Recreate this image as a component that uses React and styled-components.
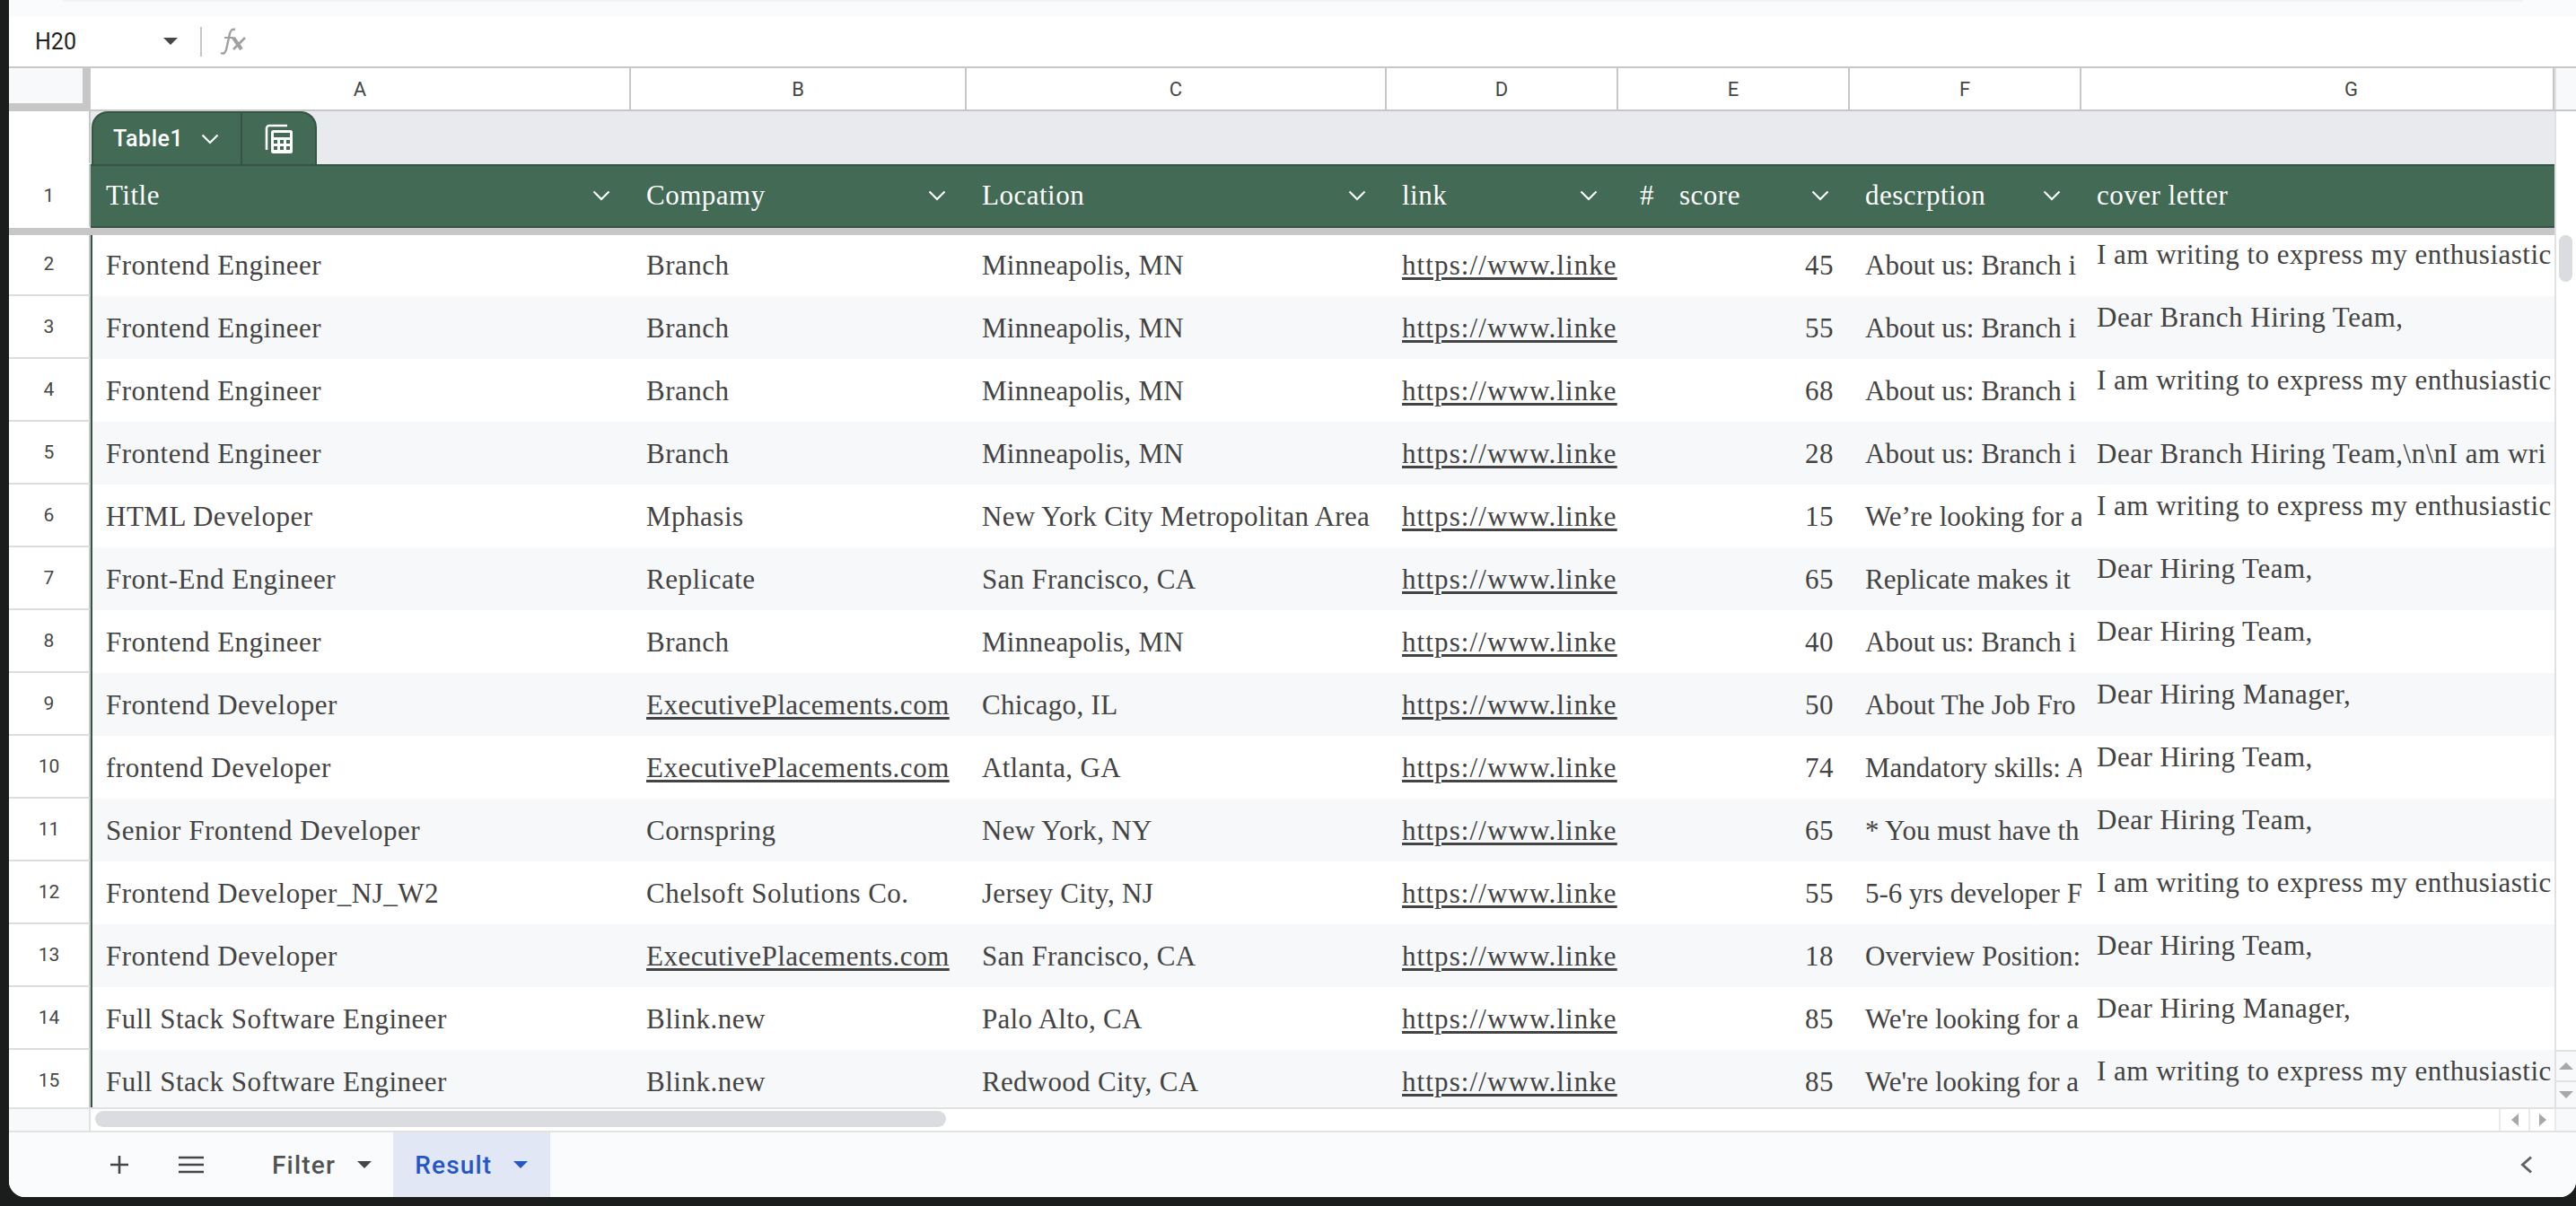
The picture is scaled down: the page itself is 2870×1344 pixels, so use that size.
import styled, { createGlobalStyle } from "styled-components";

const GlobalStyle = createGlobalStyle`
    html, body {
        margin: 0;
        padding: 0;
        background-color: #1b1d1c;
        overflow: hidden;
    }
    * {
        box-sizing: border-box;
    }
`;

const columns = "602px 374px 468px 258px 258px 258px 527px";
const serif = `"Liberation Serif", Georgia, serif`;
const sans = `Roboto, Arial, sans-serif`;

const Frame = styled.div`
    width: 2870px;
    height: 1344px;
    padding: 0 0 10px 10px;
    background-color: #1b1d1c;
`;

const Sheet = styled.div`
    height: 100%;
    display: flex;
    flex-direction: column;
    background-color: #fff;
    border-radius: 0 0 18px 18px;
    overflow: hidden;
`;

const TopBand = styled.div`
    height: 18px;
    flex: none;
    background-color: #f9fbfd;
    padding: 0 59px 0 60px;
`;

const TopPill = styled.div`
    height: 2px;
    background-color: #f0f4f9;
`;

const FormulaBar = styled.div`
    height: 56px;
    flex: none;
    display: flex;
    align-items: center;
    padding-left: 29px;
    background-color: #fff;
`;

const CellName = styled.div`
    width: 143px;
    font: 400 25px ${sans};
    color: #1f1f1f;
`;

const Separator = styled.div`
    width: 2px;
    height: 33px;
    margin: 0 20px 0 25px;
    background-color: #c7c7c7;
`;

const ColumnBar = styled.div`
    height: 50px;
    flex: none;
    display: flex;
    border-top: 2px solid #c7c7c7;
    border-bottom: 2px solid #c7c7c7;
    background-color: #fff;
`;

const Corner = styled.div`
    width: 91px;
    height: 48px;
    flex: none;
    margin-bottom: -2px;
    background-color: #f8f9fa;
    border-right: 9px solid #c7c7c7;
    border-bottom: 9px solid #c7c7c7;
`;

const ColumnLetters = styled.div`
    display: grid;
    grid-template-columns: ${columns};
`;

const ColumnLetter = styled.div`
    display: flex;
    align-items: center;
    justify-content: center;
    padding-left: ${props => props.$shift || 0}px;
    border-right: 2px solid #c7c7c7;
    font: 400 22px ${sans};
    color: #444746;
`;

const ScrollCorner = styled.div`
    flex: 1;
    background-color: #f8f9fa;
    border-left: 2px solid #e1e1e1;
`;

const Body = styled.div`
    height: 1110px;
    flex: none;
    display: flex;
`;

const Main = styled.div`
    width: 2836px;
    flex: none;
    display: flex;
    flex-direction: column;
    overflow: hidden;
`;

const TabRow = styled.div`
    height: 59px;
    flex: none;
    display: flex;
`;

const RowHead = styled.div`
    width: 91px;
    flex: none;
    display: flex;
    align-items: center;
    justify-content: center;
    background-color: #fff;
    border-right: 2px solid #c7c7c7;
    border-bottom: 2px solid ${props => props.$noLine ? "transparent" : "#dcdcdc"};
    font: 400 21px ${sans};
    color: #444746;
`;

const TabStrip = styled.div`
    flex: 1;
    display: flex;
    align-items: flex-end;
    padding-left: 1px;
    background-color: #e8eaed;
`;

const TableTab = styled.div`
    width: 251px;
    height: 59px;
    display: flex;
    background-color: #436a55;
    border: 2px solid #355443;
    border-bottom: 0;
    border-radius: 18px 18px 0 0;
`;

const TabName = styled.div`
    width: 166px;
    display: flex;
    align-items: center;
    gap: 20px;
    padding-left: 22px;
    border-right: 2px solid #355443;
    font: 500 25px ${sans};
    letter-spacing: 0.5px;
    color: #fff;
`;

const TabIcon = styled.div`
    flex: 1;
    display: flex;
    align-items: center;
    justify-content: center;
`;

const HeaderRow = styled.div`
    height: 71px;
    flex: none;
    display: flex;
`;

const HeaderCells = styled.div`
    flex: 1;
    display: grid;
    grid-template-columns: ${columns};
    background-color: #436a55;
    border-top: 2px solid #355443;
    border-bottom: 2px solid #355443;
`;

const HeaderCell = styled.div`
    display: flex;
    align-items: center;
    padding: 0 23px 1px 17px;
    font: 400 31px ${serif};
    letter-spacing: 0.5px;
    color: #fff;
`;

const HeaderLabel = styled.span`
    flex: 1;
    white-space: nowrap;
`;

const TypeMark = styled.span`
    width: 51px;
    padding-left: 7px;
`;

const ThickLine = styled.div`
    height: 8px;
    flex: none;
    background-color: #c7c7c7;
`;

const Rows = styled.div`
    flex: 1;
    overflow: hidden;
`;

const Row = styled.div`
    height: ${props => props.$first ? "68px" : "70px"};
    display: flex;
`;

const Cells = styled.div`
    flex: 1;
    display: grid;
    grid-template-columns: ${columns};
    background-color: ${props => props.$striped ? "#f6f8f9" : "#fff"};
    box-shadow: inset 2px 0 0 #355443;
`;

const Cell = styled.div`
    display: flex;
    align-items: flex-end;
    justify-content: ${props => props.$number ? "flex-end" : "flex-start"};
    min-width: 0;
    overflow: hidden;
    padding: 0 ${props => props.$number ? "18px" : "0"} ${props => props.$top ? "24px" : "0"} ${props => props.$number ? "0" : "17px"};
    font: 400 31px/${props => props.$top ? "44px" : "68px"} ${serif};
    letter-spacing: ${props => props.$spacing ?? 0.5}px;
    white-space: nowrap;
    color: #434343;
`;

const LinkText = styled.span`
    text-decoration: underline;
    text-underline-offset: 3px;
    letter-spacing: ${props => props.$spacing ?? 0.5}px;
`;

const RowNumber = styled(RowHead)`
    align-items: flex-end;
    line-height: 68px;
`;

const VerticalBar = styled.div`
    flex: 1;
    display: flex;
    flex-direction: column;
    background-color: #fff;
    border-left: 2px solid #e1e1e1;
`;

const VerticalTop = styled.div`
    height: 138px;
    flex: none;
    background-color: #fff;
`;

const VerticalThumb = styled.div`
    width: 15px;
    height: 52px;
    flex: none;
    margin-left: 3px;
    border-radius: 8px;
    background-color: #dadce0;
`;

const Spacer = styled.div`
    flex: 1;
`;

const VerticalArrow = styled.div`
    height: ${props => props.$height}px;
    flex: none;
    display: flex;
    align-items: center;
    justify-content: center;
    border-top: 2px solid #e1e1e1;
    background-color: #f8f9fa;
`;

const HorizontalBar = styled.div`
    height: 26px;
    flex: none;
    display: flex;
    border-top: 2px solid #e1e1e1;
    background-color: #fff;
`;

const BarHead = styled.div`
    width: 91px;
    flex: none;
    background-color: #f8f9fa;
    border-right: 2px solid #e1e1e1;
`;

const HorizontalTrack = styled.div`
    flex: 1;
    padding: 2px 0 0 5px;
`;

const HorizontalThumb = styled.div`
    width: 948px;
    height: 18px;
    border-radius: 9px;
    background-color: #dadce0;
`;

const ArrowBox = styled.div`
    width: ${props => props.$width}px;
    flex: none;
    display: flex;
    align-items: center;
    justify-content: center;
    border-left: 2px solid #e8eaed;
    background-color: ${props => props.$fill ? "#f8f9fa" : "#fff"};
`;

const SheetTabs = styled.div`
    flex: 1;
    display: flex;
    align-items: stretch;
    border-top: 2px solid #e1e3e1;
    background-color: #f9fbfd;
`;

const TabTool = styled.div`
    flex: none;
    display: flex;
    align-items: center;
    margin-left: ${props => props.$left}px;
`;

const SheetTab = styled.div`
    flex: none;
    display: flex;
    align-items: center;
    padding: 0 ${props => props.$right}px 0 ${props => props.$pad}px;
    gap: 24px;
    background-color: ${props => props.$active ? "#e1e7f5" : "transparent"};
    font: 500 28px ${sans};
    letter-spacing: 1.2px;
    color: ${props => props.$active ? "#2456c6" : "#505352"};
`;

const CollapseButton = styled.div`
    flex: none;
    display: flex;
    align-items: center;
    margin-left: auto;
    padding-right: 48px;
`;

function Chevron({ color = "#fff" }) {
    return (
        <svg width="20" height="12" viewBox="0 0 20 12" fill="none">
            <polyline points="1.5,1.5 10,10 18.5,1.5" stroke={color} strokeWidth="2.2" />
        </svg>
    );
}

function Caret({ color, up }) {
    return (
        <svg width="16" height="8" viewBox="0 0 16 8">
            <polygon points={up ? "0,8 16,8 8,0" : "0,0 16,0 8,8"} fill={color} />
        </svg>
    );
}

function SideCaret({ flip }) {
    return (
        <svg width="8" height="14" viewBox="0 0 8 14">
            <polygon points={flip ? "0,0 0,14 8,7" : "8,0 8,14 0,7"} fill="#a8a8a8" />
        </svg>
    );
}

function TableCalcIcon() {
    return (
        <svg width="32" height="34" viewBox="0 0 32 34" fill="none">
            <path d="M2 29V5a3 3 0 0 1 3-3h20" stroke="#fff" strokeWidth="2.6" />
            <rect x="7" y="7" width="24" height="26" rx="2.5" fill="#fff" />
            <rect x="10" y="10" width="18" height="5" fill="#436a55" />
            <g fill="#436a55">
                <rect x="10" y="18" width="4" height="4" />
                <rect x="17" y="18" width="4" height="4" />
                <rect x="24" y="18" width="4" height="4" />
                <rect x="10" y="25" width="4" height="4" />
                <rect x="17" y="25" width="4" height="4" />
                <rect x="24" y="25" width="4" height="4" />
            </g>
        </svg>
    );
}

function FxIcon() {
    return (
        <svg width="30" height="30" viewBox="0 0 30 30" fill="none" stroke="#a0a0a0">
            <path d="M1 28c3 1.500 5 0 6-3.500l4-18c1-4 3-5.500 6-4.500" strokeWidth="2.4" />
            <path d="M5 11h10" strokeWidth="2" />
            <path d="M15 11l9 13" strokeWidth="4" />
            <path d="M28 11L15 24" strokeWidth="2.6" />
        </svg>
    );
}

function PlusIcon() {
    return (
        <svg width="20" height="20" viewBox="0 0 20 20">
            <path d="M10 0v20M0 10h20" stroke="#444746" strokeWidth="2.6" />
        </svg>
    );
}

function MenuIcon() {
    return (
        <svg width="28" height="20" viewBox="0 0 28 20">
            <path d="M0 2h28M0 10h28M0 18h28" stroke="#444746" strokeWidth="2.6" />
        </svg>
    );
}

function BackIcon() {
    return (
        <svg width="14" height="20" viewBox="0 0 14 20" fill="none">
            <polyline points="12,1.5 2.5,10 12,18.5" stroke="#5f6368" strokeWidth="3" />
        </svg>
    );
}

const branchText = "About us: Branch i";
const lookingText = "We're looking for a";
const enthusiasm = "I am writing to express my enthusiastic";

const data = [
    ["Frontend Engineer", "Branch", "Minneapolis, MN", 45, branchText, enthusiasm, true],
    ["Frontend Engineer", "Branch", "Minneapolis, MN", 55, branchText, "Dear Branch Hiring Team,", true],
    ["Frontend Engineer", "Branch", "Minneapolis, MN", 68, branchText, enthusiasm, true],
    ["Frontend Engineer", "Branch", "Minneapolis, MN", 28, branchText, "Dear Branch Hiring Team,\\n\\nI am wri", false],
    ["HTML Developer", "Mphasis", "New York City Metropolitan Area", 15, "We’re looking for a", enthusiasm, true],
    ["Front-End Engineer", "Replicate", "San Francisco, CA", 65, "Replicate makes it", "Dear Hiring Team,", true],
    ["Frontend Engineer", "Branch", "Minneapolis, MN", 40, branchText, "Dear Hiring Team,", true],
    ["Frontend Developer", "ExecutivePlacements.com", "Chicago, IL", 50, "About The Job Fro", "Dear Hiring Manager,", true],
    ["frontend Developer", "ExecutivePlacements.com", "Atlanta, GA", 74, "Mandatory skills: A", "Dear Hiring Team,", true],
    ["Senior Frontend Developer", "Cornspring", "New York, NY", 65, "* You must have th", "Dear Hiring Team,", true],
    ["Frontend Developer_NJ_W2", "Chelsoft Solutions Co.", "Jersey City, NJ", 55, "5-6 yrs developer F", enthusiasm, true],
    ["Frontend Developer", "ExecutivePlacements.com", "San Francisco, CA", 18, "Overview Position:", "Dear Hiring Team,", true],
    ["Full Stack Software Engineer", "Blink.new", "Palo Alto, CA", 85, lookingText, "Dear Hiring Manager,", true],
    ["Full Stack Software Engineer", "Blink.new", "Redwood City, CA", 85, lookingText, enthusiasm, true],
];

const headers = ["Title", "Compamy", "Location", "link", "score", "descrption", "cover letter"];

export default function App() {
    return (
        <Frame>
            <GlobalStyle />
            <Sheet>
                <TopBand><TopPill /></TopBand>
                <FormulaBar>
                    <CellName>H20</CellName>
                    <Caret color="#444746" />
                    <Separator />
                    <FxIcon />
                </FormulaBar>
                <ColumnBar>
                    <Corner />
                    <ColumnLetters>
                        {["A", "B", "C", "D", "E", "F", "G"].map(letter => (
                            <ColumnLetter key={letter} $shift={letter === "G" ? 76 : 0}>{letter}</ColumnLetter>
                        ))}
                    </ColumnLetters>
                    <ScrollCorner />
                </ColumnBar>
                <Body>
                    <Main>
                        <TabRow>
                            <RowHead $noLine />
                            <TabStrip>
                                <TableTab>
                                    <TabName>Table1 <Chevron /></TabName>
                                    <TabIcon><TableCalcIcon /></TabIcon>
                                </TableTab>
                            </TabStrip>
                        </TabRow>
                        <HeaderRow>
                            <RowHead $noLine>1</RowHead>
                            <HeaderCells>
                                {headers.map((title, i) => (
                                    <HeaderCell key={title}>
                                        {title === "score" && <TypeMark>#</TypeMark>}
                                        <HeaderLabel>{title}</HeaderLabel>
                                        {i < 6 && <Chevron />}
                                    </HeaderCell>
                                ))}
                            </HeaderCells>
                        </HeaderRow>
                        <ThickLine />
                        <Rows>
                            {data.map((row, i) => (
                                <Row key={i} $first={i === 0}>
                                    <RowNumber>{i + 2}</RowNumber>
                                    <Cells $striped={i % 2 === 1}>
                                        <Cell>{row[0]}</Cell>
                                        <Cell>{row[1].startsWith("Executive") ? <LinkText>{row[1]}</LinkText> : row[1]}</Cell>
                                        <Cell $spacing={0.3}>{row[2]}</Cell>
                                        <Cell><LinkText $spacing={1.1}>https://www.linke</LinkText></Cell>
                                        <Cell $number>{row[3]}</Cell>
                                        <Cell $spacing={0}>{row[4]}</Cell>
                                        <Cell $top={row[6]}>{row[5]}</Cell>
                                    </Cells>
                                </Row>
                            ))}
                        </Rows>
                    </Main>
                    <VerticalBar>
                        <VerticalTop />
                        <VerticalThumb />
                        <Spacer />
                        <VerticalArrow $height={34}><Caret color="#a8a8a8" up /></VerticalArrow>
                        <VerticalArrow $height={30}><Caret color="#a8a8a8" /></VerticalArrow>
                    </VerticalBar>
                </Body>
                <HorizontalBar>
                    <BarHead />
                    <HorizontalTrack><HorizontalThumb /></HorizontalTrack>
                    <ArrowBox $width={33}><SideCaret /></ArrowBox>
                    <ArrowBox $width={29}><SideCaret flip /></ArrowBox>
                    <ArrowBox $width={24} $fill />
                </HorizontalBar>
                <SheetTabs>
                    <TabTool $left={113}><PlusIcon /></TabTool>
                    <TabTool $left={56}><MenuIcon /></TabTool>
                    <SheetTab $pad={76} $right={24}>Filter <Caret color="#444746" /></SheetTab>
                    <SheetTab $active $pad={24} $right={25}>Result <Caret color="#2456c6" /></SheetTab>
                    <CollapseButton><BackIcon /></CollapseButton>
                </SheetTabs>
            </Sheet>
        </Frame>
    );
}
